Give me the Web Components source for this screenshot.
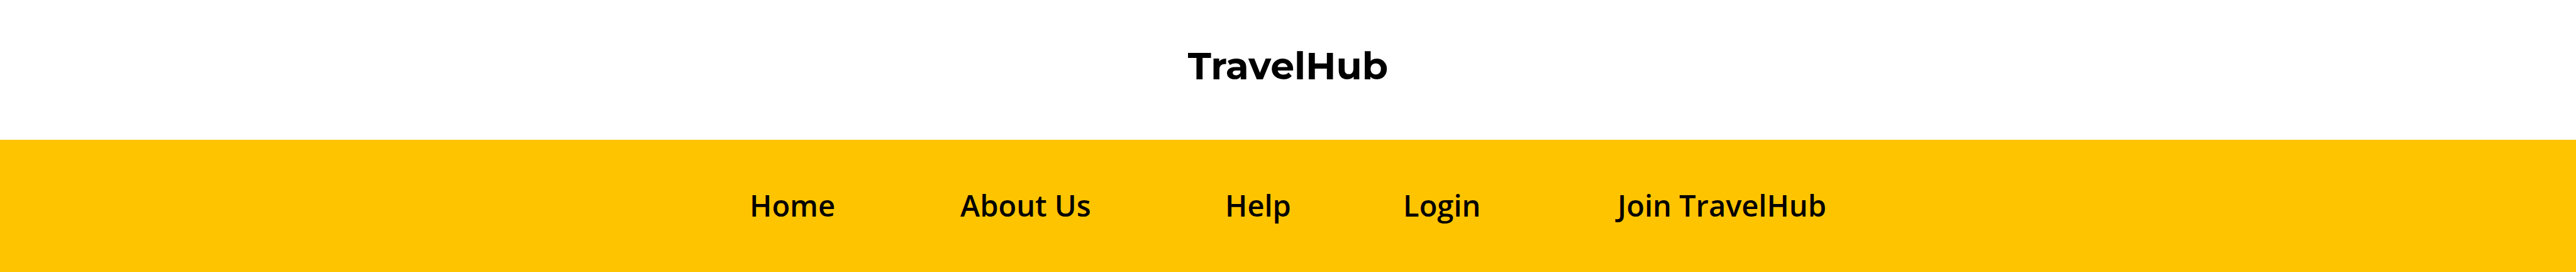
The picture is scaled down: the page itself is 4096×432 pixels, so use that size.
<!DOCTYPE html>
<html lang="en">
<head>
<meta charset="utf-8">
<title>TravelHub</title>
<style>
  html, body { margin: 0; min-height: 100%; }
  body { background: #fff; color: #000; font-family: "Open Sans", sans-serif; }
</style>
</head>
<body>
<travel-header>
  <site-brand>TravelHub</site-brand>
  <site-nav slot="nav">
    <nav-link href="#home">Home</nav-link>
    <nav-link href="#about">About Us</nav-link>
    <nav-link href="#help">Help</nav-link>
    <nav-link href="#login">Login</nav-link>
    <nav-link href="#join">Join TravelHub</nav-link>
  </site-nav>
</travel-header>
<script>
  const define = (name, html, setup) => {
    const template = document.createElement('template');
    template.innerHTML = html;
    customElements.define(name, class extends HTMLElement {
      constructor() {
        super();
        this.attachShadow({ mode: 'open' }).append(template.content.cloneNode(true));
      }
      connectedCallback() { if (setup) setup(this); }
    });
  };

  define('travel-header', `
    <style>
      :host { display: block; }
      header { display: flex; flex-direction: column; min-height: 100vh; }
      .top { display: flex; justify-content: center; padding: 67px 0 79px; }
      ::slotted([slot="nav"]) { flex: 1; }
    </style>
    <header><div class="top"><slot></slot></div><slot name="nav"></slot></header>`);

  define('site-brand', `
    <style>
      :host { display: block; }
      h1 { margin: 0; font: 700 60px/76px Montserrat, Inter, sans-serif; }
    </style>
    <h1><slot></slot></h1>`);

  define('site-nav', `
    <style>
      :host { display: block; background: #ffc400; }
      nav {
        display: grid;
        grid-template-columns: 335px 421px 283px 341px auto;
        justify-content: center;
        padding: 72px 0;
      }
    </style>
    <nav aria-label="Main"><slot></slot></nav>`);

  define('nav-link', `
    <style>
      :host { display: block; }
      a { display: block; color: #000; text-decoration: none; font: 600 47px/64px "Open Sans", sans-serif; white-space: nowrap; }
    </style>
    <a><slot></slot></a>`,
    el => { el.shadowRoot.querySelector('a').href = el.getAttribute('href'); });
</script>
</body>
</html>
